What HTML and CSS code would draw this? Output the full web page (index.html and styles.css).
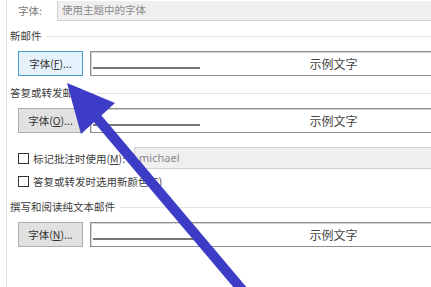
FILE: index.html
```html
<!DOCTYPE html>
<html>
	<head>
		<title>字体设置</title>
		<link rel="stylesheet" href="styles.css">
	</head>
	<body>
		<div class="pane">
			<div class="theme-row">
				<span class="theme-label">字体:</span>
				<div class="theme-field">使用主题中的字体</div>
			</div>

			<div class="group-title group-new"><span>新邮件</span><i class="rule"></i></div>
			<div class="font-row">
				<button class="font-btn focused">字体(<u>F</u>)...</button>
				<div class="preview">示例文字</div>
			</div>

			<div class="group-title group-reply"><span>答复或转发邮件</span><i class="rule"></i></div>
			<div class="font-row">
				<button class="font-btn">字体(<u>O</u>)...</button>
				<div class="preview">示例文字</div>
			</div>

			<div class="check-row check-mark">
				<span class="box"></span>
				<span class="check-text">标记批注时使用(<u>M</u>):</span>
				<div class="name-field">michael</div>
			</div>
			<div class="check-row check-color">
				<span class="box"></span>
				<span class="check-text">答复或转发时选用新颜色(<u>C</u>)</span>
			</div>

			<div class="group-title group-plain"><span>撰写和阅读纯文本邮件</span><i class="rule"></i></div>
			<div class="font-row">
				<button class="font-btn">字体(<u>N</u>)...</button>
				<div class="preview">示例文字</div>
			</div>
		</div>

		<svg class="arrow" width="431" height="287" viewBox="0 0 431 287">
			<line x1="97" y1="118" x2="244" y2="292" stroke="#3c3cc6" stroke-width="10"/>
			<polygon points="67,83 115,103 81,134" fill="#3c3cc6"/>
		</svg>
	</body>
</html>
```

FILE: styles.css
```css
body {
	margin: 0;
	width: 431px;
	height: 287px;
	overflow: hidden;
	background: #fff;
	font-family: "Noto Sans CJK SC", "Noto Sans", sans-serif;
	font-size: 10.5px;
	color: #3c3c3c;
	position: relative;
}
.pane {
	margin-left: 6px;
	width: 421px;
	height: 287px;
	border-left: 1px solid #e2e2e2;
	border-right: 2px solid #8c8c8c;
	padding-left: 3px;
	overflow: hidden;
}
.theme-row {
	display: flex;
	align-items: center;
	height: 21px;
}
.theme-label {
	width: 39px;
	padding-left: 8px;
	color: #7a7a7a;
}
.theme-field {
	flex: 1;
	height: 20px;
	line-height: 18px;
	background: #efeff0;
	border-left: 1px solid #cfcfcf;
	border-bottom: 1px solid #cfcfcf;
	box-sizing: border-box;
	padding-left: 4px;
	color: #8a8a8a;
}
.group-title {
	display: flex;
	align-items: center;
	height: 14px;
	line-height: 14px;
}
.group-title .rule {
	flex: 1;
	border-top: 1px solid #e3e3e3;
	margin-left: 5px;
}
.group-new { margin-top: 8px; }
.group-reply { margin-top: 10px; }
.group-plain { margin-top: 9px; }
.font-row {
	display: flex;
	margin-top: 8px;
	margin-left: 8px;
	height: 25px;
}
.font-btn {
	width: 65px;
	height: 25px;
	margin: 0;
	padding: 0;
	background: #e1e1e1;
	border: 1px solid #adadad;
	font-family: inherit;
	font-size: 10.5px;
	color: #333;
}
.font-btn.focused {
	background: #e5f1fb;
	border-color: #4a9bd0;
}
.preview {
	flex: 1;
	margin-left: 7px;
	margin-right: -146px;
	border: 1px solid #8e8e8e;
	box-shadow: inset 1px 1px 0 #d4d4d4;
	background: #fff linear-gradient(#777, #777) no-repeat 2px 15px / 107px 2px;
	text-align: center;
	line-height: 23px;
	font-size: 12px;
	color: #444;
}
.check-row {
	display: flex;
	align-items: center;
	margin-left: 8px;
}
.check-mark {
	margin-top: 14px;
	height: 22px;
}
.check-color {
	margin-top: 2px;
	height: 20px;
}
.box {
	width: 9px;
	height: 9px;
	border: 1px solid #333;
	background: #fff;
	margin-right: 4px;
}
.name-field {
	flex: 1;
	height: 22px;
	line-height: 20px;
	box-sizing: border-box;
	margin-left: 9px;
	margin-right: -4px;
	padding-left: 4px;
	background: #efeff0;
	border: 1px solid #cfcfcf;
	color: #8a8a8a;
	font-family: "Noto Sans", sans-serif;
	font-size: 11px;
}
.arrow {
	position: absolute;
	left: 0;
	top: 0;
}
```
